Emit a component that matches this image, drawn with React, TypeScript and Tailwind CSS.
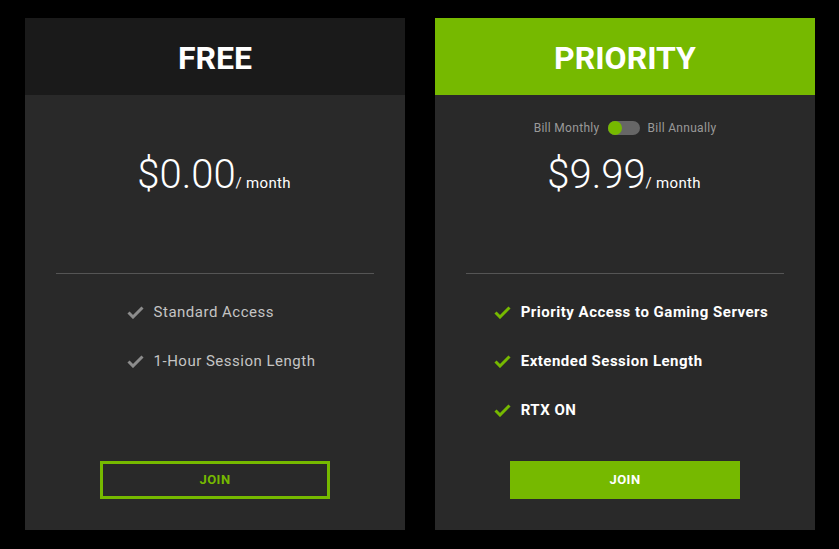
import type { ReactNode } from 'react';

// Two plan cards side by side: a plain "FREE" card and the green "PRIORITY" card.
type Plan = {
  name: string;
  price: string;
  highlight: boolean;
  features: string[];
};

const plans: Plan[] = [
  {
    name: 'FREE',
    price: '$0.00',
    highlight: false,
    features: ['Standard Access', '1-Hour Session Length'],
  },
  {
    name: 'PRIORITY',
    price: '$9.99',
    highlight: true,
    features: [
      'Priority Access to Gaming Servers',
      'Extended Session Length',
      'RTX ON',
    ],
  },
];

function Check({ green }: { green: boolean }) {
  return (
    <svg
      width="17"
      height="13"
      viewBox="0 0 17 13"
      fill="none"
      className="shrink-0"
    >
      <path
        d="M1.5 6.5 L6 11 L15.5 1.5"
        stroke={green ? '#76b900' : '#8c8c8c'}
        strokeWidth="3"
        strokeLinecap="butt"
        strokeLinejoin="miter"
      />
    </svg>
  );
}

function BillingToggle() {
  return (
    <div className="flex h-[18px] items-center justify-center gap-[8px] text-[12px] tracking-[0.3px] text-[#9a9a9a]">
      <span>Bill Monthly</span>
      <span className="flex h-[14px] w-[32px] items-center rounded-full bg-[#666666]">
        <span className="h-[14px] w-[14px] rounded-full bg-[#76b900]" />
      </span>
      <span>Bill Annually</span>
    </div>
  );
}

function Card({ plan, children }: { plan: Plan; children?: ReactNode }) {
  const { highlight } = plan;
  return (
    <div className="flex h-[512px] w-[380px] flex-col bg-[#292929]">
      <div
        className={
          highlight
            ? 'flex h-[77px] items-center justify-center bg-[#76b900] pt-[2px]'
            : 'flex h-[77px] items-center justify-center bg-[#1a1a1a] pt-[2px]'
        }
      >
        <h2 className="text-[32px] font-bold leading-none text-white">
          {plan.name}
        </h2>
      </div>

      {/* price block; the free card keeps an empty row where the toggle sits */}
      <div className="flex h-[178px] flex-col pt-[24px]">
        {children ?? <div className="h-[18px]" />}
        <div className="mt-[14px] flex items-baseline justify-center pr-[2px] text-white">
          <span className="text-[40px] font-light leading-[48px]">{plan.price}</span>
          <span className="text-[15px] font-normal tracking-[0.3px]">/ month</span>
        </div>
      </div>

      <div className="mx-[31px] h-px bg-[#555555]" />

      <ul className="mx-auto flex w-fit flex-col gap-[29px] pl-[12px] pt-[28px]">
        {plan.features.map((f) => (
          <li key={f} className="flex h-[20px] items-center gap-[10px]">
            <Check green={highlight} />
            <span
              className={
                highlight
                  ? 'text-[15px] font-bold tracking-[0.5px] text-white'
                  : 'text-[15px] font-normal tracking-[0.5px] text-[#c4c4c4]'
              }
            >
              {f}
            </span>
          </li>
        ))}
      </ul>

      <div className="mb-[31px] mt-auto flex justify-center">
        {highlight ? (
          <button className="h-[38px] w-[230px] bg-[#76b900] text-[13px] font-bold tracking-[0.5px] text-white">
            JOIN
          </button>
        ) : (
          <button className="h-[38px] w-[230px] border-[3px] border-[#76b900] text-[13px] font-bold tracking-[0.5px] text-[#76b900]">
            JOIN
          </button>
        )}
      </div>
    </div>
  );
}

export default function App() {
  return (
    <div
      className="flex h-[549px] w-[839px] gap-[30px] bg-black pl-[25px] pt-[18px]"
      style={{ fontFamily: 'Roboto, "Liberation Sans", sans-serif' }}
    >
      <Card plan={plans[0]} />
      <Card plan={plans[1]}>
        <BillingToggle />
      </Card>
    </div>
  );
}
